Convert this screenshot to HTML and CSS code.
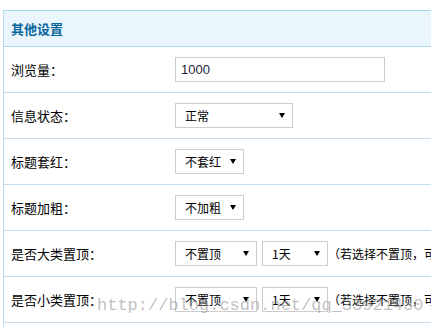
FILE: index.html
```html
<!DOCTYPE html>
<html lang="zh-CN">
<head>
    <meta charset="UTF-8">
    <meta name="viewport" content="width=device-width, initial-scale=1.0">
    <title>其他设置</title>
    <link rel="stylesheet" href="styles.css">
</head>
<body>
    <div class="panel">
        <div class="panel-title">其他设置</div>
        <div class="row">
            <div class="label">浏览量：</div>
            <div class="field"><input class="text-input" type="text" value="1000"></div>
        </div>
        <div class="row">
            <div class="label">信息状态：</div>
            <div class="field">
                <span class="select-wrap"><select class="select w-status"><option>正常</option><option>锁定</option></select></span>
            </div>
        </div>
        <div class="row">
            <div class="label">标题套红：</div>
            <div class="field">
                <span class="select-wrap"><select class="select w-red"><option>不套红</option><option>套红</option></select></span>
            </div>
        </div>
        <div class="row">
            <div class="label">标题加粗：</div>
            <div class="field">
                <span class="select-wrap"><select class="select w-red"><option>不加粗</option><option>加粗</option></select></span>
            </div>
        </div>
        <div class="row">
            <div class="label">是否大类置顶：</div>
            <div class="field">
                <span class="select-wrap"><select class="select w-top"><option>不置顶</option><option>置顶</option></select></span>
                <span class="select-wrap"><select class="select w-day"><option>1天</option><option>3天</option><option>7天</option></select></span>
                <span class="hint">（若选择不置顶，可以不选择置顶时间）</span>
            </div>
        </div>
        <div class="row">
            <div class="label">是否小类置顶：</div>
            <div class="field">
                <span class="select-wrap"><select class="select w-top"><option>不置顶</option><option>置顶</option></select></span>
                <span class="select-wrap"><select class="select w-day"><option>1天</option><option>3天</option><option>7天</option></select></span>
                <span class="hint">（若选择不置顶，可以不选择置顶时间）</span>
            </div>
        </div>
        <div class="row"></div>
    </div>
    <div class="watermark">http://blog.csdn.net/qq_33921430</div>
</body>
</html>
```

FILE: styles.css
```css
body {
    margin: 0;
    padding: 10px 0 0 3px;
    overflow: hidden;
    font-family: "Noto Sans CJK SC", "Liberation Sans", sans-serif;
    font-size: 13px;
    color: #000;
    background-color: #fff;
}
.panel {
    width: 640px;
    border-top: 1px solid #a8d6ec;
    border-left: 1px solid #bcdaea;
}
.panel-title {
    height: 35px;
    line-height: 35px;
    padding-left: 7px;
    background-color: #e9f6fd;
    border-bottom: 1px solid #a8d6ec;
    color: #0b679e;
    font-weight: bold;
}
.row {
    display: flex;
    align-items: center;
    height: 45px;
    border-bottom: 1px solid #c6dded;
}
.label {
    width: 164px;
    padding-left: 7px;
    flex-shrink: 0;
}
.field {
    display: flex;
    align-items: center;
    gap: 5px;
    white-space: nowrap;
}
.text-input {
    box-sizing: border-box;
    width: 210px;
    height: 25px;
    margin: 0;
    padding: 0 5px;
    border: 1px solid #cccccc;
    font-family: "Liberation Sans", sans-serif;
    font-size: 13px;
    color: #1d1d3a;
    outline: none;
}
.select-wrap {
    position: relative;
    display: block;
}
.select-wrap::after {
    content: "";
    position: absolute;
    top: 10px;
    right: 8px;
    border-left: 3px solid transparent;
    border-right: 3px solid transparent;
    border-top: 5px solid #000;
    pointer-events: none;
}
.select {
    display: block;
    box-sizing: border-box;
    height: 25px;
    margin: 0;
    padding: 0 0 0 9px;
    border: 1px solid #cccccc;
    border-radius: 0;
    background-color: #fff;
    appearance: none;
    -webkit-appearance: none;
    font-family: "Noto Sans CJK SC", "Liberation Sans", sans-serif;
    font-size: 12px;
    color: #000;
    outline: none;
}
.w-status { width: 118px; }
.w-red { width: 69px; }
.w-top { width: 82px; }
.w-day { width: 66px; }
.hint {
    font-size: 12px;
    margin-left: -5px;
}
.watermark {
    position: absolute;
    left: 97px;
    top: 296px;
    font-family: "Liberation Mono", monospace;
    font-size: 17px;
    line-height: 20px;
    color: rgba(150, 150, 150, 0.6);
    pointer-events: none;
}
```
